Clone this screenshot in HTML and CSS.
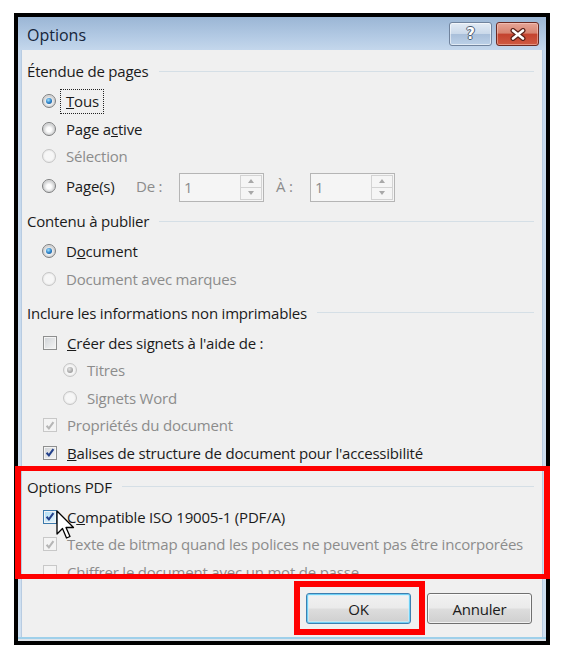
FILE: index.html
```html
<!DOCTYPE html>
<html lang="fr">
<head>
  <meta charset="UTF-8" />
  <title>Options</title>
  <link rel="stylesheet" href="styles.css">
</head>
<body>
  <div class="shot">
    <div class="window">
      <header class="titlebar">
        <span class="title">Options</span>
        <div class="caption-buttons">
          <span class="cap-btn cap-help">?</span>
          <span class="cap-btn cap-close">
            <svg width="18" height="13" viewBox="0 0 18 13">
              <path d="M4 2.5 L14 10.5 M14 2.5 L4 10.5" stroke="#5b2119" stroke-width="5" stroke-linecap="round"/>
              <path d="M4 2.5 L14 10.5 M14 2.5 L4 10.5" stroke="#ffffff" stroke-width="2.6" stroke-linecap="round"/>
            </svg>
          </span>
        </div>
      </header>

      <div class="client">
        <div class="panel">
          <div class="options">

            <section class="group">
              <div class="group-title">Étendue de pages</div>
              <div class="rows">
                <div class="row"><span class="radio checked"></span><span class="focus"><u>T</u>ous</span></div>
                <div class="row"><span class="radio"></span>Page a<u>c</u>tive</div>
                <div class="row disabled"><span class="radio"></span>Sélection</div>
                <div class="row row-spin">
                  <span class="radio"></span>
                  <span class="spin-label">Pa<u>g</u>e(s)</span>
                  <span class="spin-caption">De :</span>
                  <span class="spin"><span class="spin-value">1</span><span class="spin-btns"><i class="up"></i><i class="down"></i></span></span>
                  <span class="spin-caption spin-caption-to">À :</span>
                  <span class="spin"><span class="spin-value">1</span><span class="spin-btns"><i class="up"></i><i class="down"></i></span></span>
                </div>
              </div>
            </section>

            <section class="group">
              <div class="group-title">Contenu à publier</div>
              <div class="rows">
                <div class="row"><span class="radio checked"></span>D<u>o</u>cument</div>
                <div class="row disabled"><span class="radio"></span>Document avec marques</div>
              </div>
            </section>

            <section class="group">
              <div class="group-title">Inclure les informations non imprimables</div>
              <div class="rows">
                <div class="row"><span class="checkbox"></span><u>C</u>réer des signets à l'aide de :</div>
                <div class="row indent disabled"><span class="radio checked"></span>Titres</div>
                <div class="row indent disabled"><span class="radio"></span>Signets Word</div>
                <div class="row disabled"><span class="checkbox checked"><svg viewBox="0 0 13 13"><path d="M2.8 6.8 L5.3 9.6 L10.2 2.8"/></svg></span>Propriétés du document</div>
                <div class="row"><span class="checkbox checked"><svg viewBox="0 0 13 13"><path d="M2.8 6.8 L5.3 9.6 L10.2 2.8"/></svg></span><u>B</u>alises de structure de document pour l'accessibilité</div>
              </div>
            </section>

            <section class="group">
              <div class="group-title">Options PDF</div>
              <div class="rows">
                <div class="row"><span class="checkbox checked hover"><svg viewBox="0 0 13 13"><path d="M2.8 6.8 L5.3 9.6 L10.2 2.8"/></svg></span>C<u>o</u>mpatible ISO 19005-1 (PDF/A)</div>
                <div class="row disabled"><span class="checkbox checked"><svg viewBox="0 0 13 13"><path d="M2.8 6.8 L5.3 9.6 L10.2 2.8"/></svg></span>Texte de bitmap quand les polices ne peuvent pas être incorporées</div>
                <div class="row disabled"><span class="checkbox"></span>Chiffrer le document avec un mot de passe</div>
              </div>
            </section>

          </div>

          <div class="buttons">
            <button class="btn btn-default">OK</button>
            <button class="btn">Annuler</button>
          </div>
        </div>
      </div>
      <div class="frame-bottom"></div>
    </div>

    <!-- annotations drawn over the screenshot -->
    <div class="mark mark-pdf"></div>
    <div class="mark mark-ok"></div>
    <svg class="cursor" width="20" height="32" viewBox="0 0 20 32">
      <path d="M1 1 L1 24 L6.5 18.5 L10.5 28 L14 26.5 L10 17.5 L17.5 17.5 Z" fill="#fff" stroke="#000" stroke-width="1.3" stroke-linejoin="round"/>
    </svg>
  </div>
</body>
</html>
```

FILE: styles.css
```css
body {
  margin: 0;
  background: #fff;
  color: #1b1b1b;
  font-family: "Open Sans", "Noto Sans", sans-serif;
  font-size: 15px;
  letter-spacing: -0.2px;
}

.shot {
  position: relative;
  width: 566px;
  height: 657px;
  padding: 13px 0 0 14px;
  box-sizing: border-box;
}

.window {
  width: 528px;
  border: 4px solid #000;
}

/* title bar */
.titlebar {
  display: flex;
  justify-content: space-between;
  height: 33px;
  padding: 0 7px 0 9px;
  background: linear-gradient(#9bb6d5, #b3cae4 60%, #c4d7ec);
}

.title {
  font-size: 16px;
  color: #15253a;
  line-height: 37px;
  letter-spacing: 0;
}

.caption-buttons {
  display: flex;
  gap: 4px;
  padding-top: 5px;
}

.cap-btn {
  display: flex;
  align-items: center;
  justify-content: center;
  width: 43px;
  height: 24px;
  box-sizing: border-box;
  border-radius: 3px;
}

.cap-help {
  border: 1px solid #70839d;
  background: linear-gradient(#e3ebf5, #cad9ea 48%, #a9bfda 52%, #bcd1e8);
  box-shadow: inset 0 0 0 1px rgba(255, 255, 255, 0.55);
  color: #fff;
  font-family: "DejaVu Sans", sans-serif;
  font-weight: bold;
  font-size: 15px;
  text-shadow: 1px 0 #4d5c70, -1px 0 #4d5c70, 0 1px #4d5c70, 0 -1px #4d5c70;
}

.cap-close {
  border: 1px solid #6b2a22;
  background: linear-gradient(#e6a597, #d88572 45%, #c4432f 52%, #cf5a42);
  box-shadow: inset 0 0 0 1px rgba(255, 220, 210, 0.45);
}

/* window body */
.client {
  padding: 0 3px;
  background: linear-gradient(#c4d7ec, #cfe0f1);
}

.panel {
  background: #f0f0f0;
  box-shadow: inset 1px 0 #b8cce2, inset -1px 0 #b8cce2;
}

.options {
  height: 526px;
  padding-top: 6px;
  box-sizing: border-box;
  overflow: hidden;
}

.group {
  margin-bottom: 5px;
}

.group-title {
  display: flex;
  align-items: center;
  height: 30px;
  padding: 0 9px 0 6px;
}

.group-title::after {
  content: "";
  flex: 1;
  height: 1px;
  margin-left: 10px;
  background: #d5dfe6;
}

.rows {
  padding-top: 1.5px;
}

.row {
  display: flex;
  align-items: center;
  height: 27.5px;
  padding-left: 21px;
  white-space: nowrap;
}

.row.indent {
  padding-left: 42px;
}

.row.disabled {
  color: #8c8c8c;
}

.focus {
  margin-left: -6px;
  padding: 1px 4px 2px 5px;
  border: 1px dotted #222;
}

/* radios */
.radio {
  position: relative;
  flex: none;
  width: 14px;
  height: 14px;
  margin-right: 10px;
  box-sizing: border-box;
  border: 1px solid #7d7e7f;
  border-radius: 50%;
  background: radial-gradient(circle at 50% 55%, #fdfdfd 25%, #d0d1d2 62%, #eeeeee 80%, #ffffff);
}

.radio.checked::after {
  content: "";
  position: absolute;
  left: 3px;
  top: 3px;
  width: 6px;
  height: 6px;
  border-radius: 50%;
  background: radial-gradient(circle at 40% 35%, #a6e2fb, #2f86cc 50%, #0c3f78);
}

.disabled .radio {
  border-color: #c6c6c6;
  background: radial-gradient(circle, #f6f6f6 50%, #e6e6e6 75%, #f4f4f4);
}

.disabled .radio.checked::after {
  background: radial-gradient(circle at 40% 35%, #e2e2e2, #a8a8a8 60%, #8f8f8f);
}

/* checkboxes */
.checkbox {
  display: flex;
  align-items: center;
  justify-content: center;
  flex: none;
  width: 14px;
  height: 14px;
  margin: 0 10px 0 1px;
  box-sizing: border-box;
  border: 1px solid #8e8f8f;
  background: linear-gradient(135deg, #cfd2d6, #f6f6f6);
  box-shadow: inset 0 0 0 1px #f4f4f4;
}

.checkbox svg {
  width: 13px;
  height: 13px;
  fill: none;
  stroke: #23418b;
  stroke-width: 2.2;
}

.checkbox.hover {
  border-color: #3d7bad;
  background: linear-gradient(135deg, #aedcf5, #e6f6fd);
}

.disabled .checkbox {
  border-color: #c8c8c8;
  background: #f4f4f4;
}

.disabled .checkbox svg {
  stroke: #b6b6b6;
}

/* page range */
.row-spin {
  height: 31px;
}

.spin-label {
  width: 70px;
}

.spin-caption {
  width: 43px;
  color: #8c8c8c;
}

.spin-caption-to {
  width: 34px;
  margin-left: 12px;
}

.spin {
  display: flex;
  width: 85px;
  height: 29px;
  margin-top: 3px;
  box-sizing: border-box;
  border: 1px solid #b5b5b5;
  background: #f5f5f5;
}

.spin-value {
  flex: 1;
  padding-left: 4px;
  line-height: 27px;
  color: #8c8c8c;
}

.spin-btns {
  display: flex;
  flex-direction: column;
  width: 22px;
  margin: 1px 1px 1px 0;
  border: 1px solid #d3d3d3;
  box-sizing: border-box;
}

.spin-btns i {
  flex: 1;
  display: flex;
  align-items: center;
  justify-content: center;
}

.spin-btns i.up {
  border-bottom: 1px solid #d3d3d3;
}

.spin-btns i::after {
  content: "";
  border-left: 3.5px solid transparent;
  border-right: 3.5px solid transparent;
}

.spin-btns i.up::after {
  border-bottom: 4px solid #a8a8a8;
}

.spin-btns i.down::after {
  border-top: 4px solid #a8a8a8;
}

/* dialog buttons */
.buttons {
  display: flex;
  justify-content: flex-end;
  gap: 16px;
  height: 61px;
  padding: 17px 11px 0 0;
  box-sizing: border-box;
}

.btn {
  width: 105px;
  height: 31px;
  border: 1px solid #707070;
  border-radius: 3px;
  background: linear-gradient(#f2f2f2, #ebebeb 48%, #dddddd 52%, #cfcfcf);
  box-shadow: inset 0 0 0 1px rgba(255, 255, 255, 0.7);
  font-family: inherit;
  font-size: 15px;
  letter-spacing: inherit;
  color: #1b1b1b;
}

.btn-default {
  border-color: #3c7fb1;
  box-shadow: inset 0 0 0 1px #6fd0f5, inset 0 0 0 2px rgba(200, 240, 255, 0.6);
}

.frame-bottom {
  height: 4px;
  background: linear-gradient(#9fd0ea 0 2px, #dfe4ea 2px);
}

/* red annotation boxes */
.mark {
  position: absolute;
  box-sizing: border-box;
  border: 6px solid #ff0000;
}

.mark-pdf {
  left: 15px;
  top: 466px;
  width: 535px;
  height: 113px;
  border-top-width: 5px;
  border-bottom-width: 5px;
}

.mark-ok {
  left: 294px;
  top: 581px;
  width: 131px;
  height: 54px;
}

.cursor {
  position: absolute;
  left: 56px;
  top: 510px;
}
```
